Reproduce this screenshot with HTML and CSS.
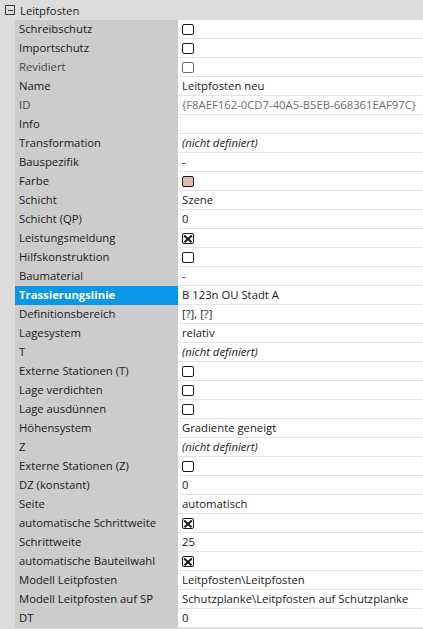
FILE: index.html
```html
<!DOCTYPE html>
<html lang="de">
<head>
    <meta charset="UTF-8">
    <title>Eigenschaften</title>
    <link rel="stylesheet" href="styles.css">
</head>
<body>
    <div class="grid">
        <div class="cat"><span class="expander"></span>Leitpfosten</div>

        <div class="row"><span class="name">Schreibschutz</span><span class="value"><span class="cb"></span></span></div>
        <div class="row"><span class="name">Importschutz</span><span class="value"><span class="cb"></span></span></div>
        <div class="row readonly"><span class="name">Revidiert</span><span class="value"><span class="cb"></span></span></div>
        <div class="row"><span class="name">Name</span><span class="value">Leitpfosten neu</span></div>
        <div class="row readonly"><span class="name">ID</span><span class="value">{F8AEF162-0CD7-40A5-B5EB-668361EAF97C}</span></div>
        <div class="row"><span class="name">Info</span><span class="value"></span></div>
        <div class="row"><span class="name">Transformation</span><span class="value undef">(nicht definiert)</span></div>
        <div class="row"><span class="name">Bauspezifik</span><span class="value">-</span></div>
        <div class="row"><span class="name">Farbe</span><span class="value"><span class="swatch"></span></span></div>
        <div class="row"><span class="name">Schicht</span><span class="value">Szene</span></div>
        <div class="row"><span class="name">Schicht (QP)</span><span class="value">0</span></div>
        <div class="row"><span class="name">Leistungsmeldung</span><span class="value"><span class="cb checked"></span></span></div>
        <div class="row"><span class="name">Hilfskonstruktion</span><span class="value"><span class="cb"></span></span></div>
        <div class="row"><span class="name">Baumaterial</span><span class="value">-</span></div>
        <div class="row selected"><span class="name">Trassierungslinie</span><span class="value">B 123n OU Stadt A</span></div>
        <div class="row"><span class="name">Definitionsbereich</span><span class="value">[?], [?]</span></div>
        <div class="row"><span class="name">Lagesystem</span><span class="value">relativ</span></div>
        <div class="row"><span class="name">T</span><span class="value undef">(nicht definiert)</span></div>
        <div class="row"><span class="name">Externe Stationen (T)</span><span class="value"><span class="cb"></span></span></div>
        <div class="row"><span class="name">Lage verdichten</span><span class="value"><span class="cb"></span></span></div>
        <div class="row"><span class="name">Lage ausdünnen</span><span class="value"><span class="cb"></span></span></div>
        <div class="row"><span class="name">Höhensystem</span><span class="value">Gradiente geneigt</span></div>
        <div class="row"><span class="name">Z</span><span class="value undef">(nicht definiert)</span></div>
        <div class="row"><span class="name">Externe Stationen (Z)</span><span class="value"><span class="cb"></span></span></div>
        <div class="row"><span class="name">DZ (konstant)</span><span class="value">0</span></div>
        <div class="row"><span class="name">Seite</span><span class="value">automatisch</span></div>
        <div class="row"><span class="name">automatische Schrittweite</span><span class="value"><span class="cb checked"></span></span></div>
        <div class="row"><span class="name">Schrittweite</span><span class="value">25</span></div>
        <div class="row"><span class="name">automatische Bauteilwahl</span><span class="value"><span class="cb checked"></span></span></div>
        <div class="row"><span class="name">Modell Leitpfosten</span><span class="value">Leitpfosten\Leitpfosten</span></div>
        <div class="row"><span class="name">Modell Leitpfosten auf SP</span><span class="value">Schutzplanke\Leitpfosten auf Schutzplanke</span></div>
        <div class="row"><span class="name">DT</span><span class="value">0</span></div>
    </div>
</body>
</html>
```

FILE: styles.css
```css
body {
    margin: 0;
    background-color: #f0f0f0;
    font-family: "Open Sans", "Noto Sans", sans-serif;
    font-size: 11.3px;
    color: #1a1a1a;
}
.grid {
    width: 423px;
    background-color: #dcdcdc;
    padding-bottom: 2px;
}
.cat {
    height: 20px;
    line-height: 19px;
    display: flex;
    align-items: center;
    padding-left: 5px;
}
.expander {
    width: 8px;
    height: 8px;
    border: 1px solid #3c3c3c;
    margin-right: 5px;
    position: relative;
}
.expander::after {
    content: "";
    position: absolute;
    left: 2px;
    top: 4px;
    width: 5px;
    height: 1px;
    background-color: #3c3c3c;
}
.row {
    display: grid;
    grid-template-columns: 163px 1fr;
    margin-left: 15px;
    height: 19px;
}
.name {
    background-color: #cccccc;
    padding-left: 4px;
    line-height: 18px;
    white-space: nowrap;
    overflow: hidden;
}
.value {
    background-color: #ffffff;
    border-bottom: 1px solid #e3e3e3;
    padding-left: 4px;
    line-height: 18px;
    white-space: nowrap;
    display: flex;
    align-items: center;
}
.readonly .name {
    color: #4a4444;
}
.readonly .value {
    color: #6d6d6d;
}
.undef {
    font-style: italic;
}
.selected .name {
    background-color: #0a97e5;
    color: #ffffff;
    font-weight: bold;
}
.cb {
    width: 10px;
    height: 9px;
    border: 1px solid #1a1a1a;
    border-radius: 2px;
    position: relative;
}
.readonly .cb {
    border-color: #6d6d6d;
}
.cb.checked::before,
.cb.checked::after {
    content: "";
    position: absolute;
    left: 0px;
    top: 4px;
    width: 10px;
    height: 1.5px;
    background-color: #1a1a1a;
    transform: rotate(42deg);
}
.cb.checked::after {
    transform: rotate(-42deg);
}
.swatch {
    width: 10px;
    height: 9px;
    border: 1px solid #1a1a1a;
    border-radius: 2px;
    background-color: #dcbcb0;
}
```
